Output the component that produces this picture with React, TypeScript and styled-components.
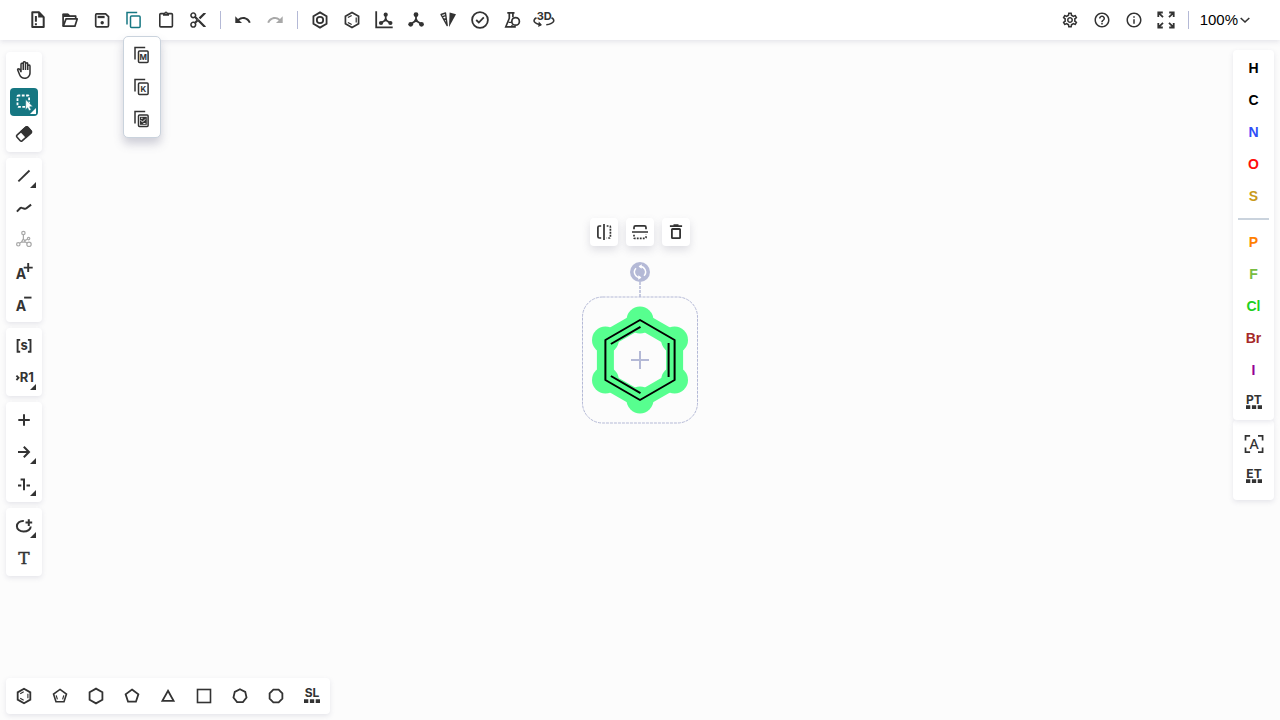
import React from 'react';
import styled, { createGlobalStyle, css } from 'styled-components';
import { MdOutlineSettings, MdHelpOutline, MdInfoOutline, MdOutlineBackHand } from 'react-icons/md';

const GlobalStyle = createGlobalStyle`
  *, *::before, *::after { box-sizing: border-box; }
  body {
    margin: 0;
    background: #fcfcfc;
    color: #333333;
    font-family: "Liberation Sans", Arial, sans-serif;
    font-size: 14px;
  }
`;

const Editor = styled.div`
  display: grid;
  grid-template-columns: auto 1fr auto;
  grid-template-rows: 40px 1fr auto;
  min-height: 100vh;
`;

const TopBar = styled.header`
  grid-area: 1 / 1 / 2 / -1;
  display: flex;
  align-items: center;
  justify-content: space-between;
  padding: 0 24px;
  background: #ffffff;
  box-shadow: 0 2px 5px rgba(103, 104, 132, 0.15);
  z-index: 2;
`;

const BarGroup = styled.div`
  display: flex;
  align-items: center;
  gap: 4px;
`;

const BarDivider = styled.span`
  width: 1px;
  height: 18px;
  margin: 0 4px;
  background: #b4b9d6;
`;

const ToolButton = styled.button<{ $active?: boolean; $accent?: boolean; $more?: boolean }>`
  position: relative;
  display: flex;
  flex: none;
  align-items: center;
  justify-content: center;
  width: 28px;
  height: 28px;
  padding: 0;
  border: 0;
  border-radius: 4px;
  background: ${(p) => (p.$active ? '#167782' : 'transparent')};
  color: ${(p) => (p.$active ? '#ffffff' : p.$accent ? '#167782' : '#333333')};
  cursor: pointer;

  &:disabled { color: #a8a8a8; }

  ${(p) =>
    p.$more &&
    css`
      &::after {
        content: '';
        position: absolute;
        right: 2px;
        bottom: 2px;
        width: 6px;
        height: 6px;
        background: currentColor;
        clip-path: polygon(100% 0, 100% 100%, 0 100%);
      }
    `}
`;

const CopyControl = styled.div`
  position: relative;
`;

const CopyMenu = styled.div`
  position: absolute;
  top: 30px;
  left: 3px;
  display: flex;
  flex-direction: column;
  gap: 4px;
  padding: 4px;
  border: 1px solid #cad3dd;
  border-radius: 5px;
  background: #ffffff;
  box-shadow: 0 6px 10px rgba(103, 104, 132, 0.3);
`;

const ZoomButton = styled.button`
  display: flex;
  align-items: center;
  gap: 2px;
  padding: 0 6px 0 3px;
  border: 0;
  background: transparent;
  color: #000000;
  font-family: inherit;
  font-size: 15px;
  line-height: 20px;
`;

const Panel = styled.div`
  display: flex;
  flex-direction: column;
  align-items: center;
  gap: 4px;
  padding: 4px;
  border-radius: 4px;
  background: #ffffff;
  box-shadow: 0 2px 5px rgba(103, 104, 132, 0.15);
`;

const LeftBar = styled.nav`
  grid-area: 2 / 1;
  display: flex;
  flex-direction: column;
  gap: 6px;
  padding: 12px 0 0 6px;
  z-index: 1;
`;

const RightBar = styled.nav`
  grid-area: 2 / 3;
  display: flex;
  flex-direction: column;
  width: 47px;
  padding: 10px 6px 0 0;
  z-index: 1;

  ${Panel}:first-child {
    position: relative;
    z-index: 1;
  }

  ${Panel}:last-child { padding: 10px 4px; }
`;

const BottomBar = styled.nav`
  grid-area: 3 / 1 / 4 / -1;
  justify-self: start;
  padding: 0 0 6px 6px;
  z-index: 1;

  ${Panel} {
    flex-direction: row;
    gap: 8px;
  }
`;

const ElementButton = styled(ToolButton)<{ $tint: string }>`
  color: ${(p) => p.$tint};
  font-family: inherit;
  font-size: 14px;
  font-weight: 700;
`;

const ElementDivider = styled.span`
  align-self: stretch;
  height: 2px;
  margin: 4px 1px;
  background: #cad3dd;
`;

const Canvas = styled.main`
  grid-area: 1 / 1 / -1 / -1;
  display: flex;
  flex-direction: column;
  align-items: center;
  justify-content: center;
  gap: 16px;
  padding-bottom: 78px;
`;

const FloatingTools = styled.div`
  display: flex;
  gap: 8px;

  ${ToolButton} {
    background: #ffffff;
    box-shadow: 0 4px 8px rgba(103, 104, 132, 0.2);
  }
`;

const Glyph = styled.text<{ $font?: string; $weight?: number }>`
  fill: currentColor;
  stroke: none;
  font-family: ${(p) => p.$font ?? 'Inter'}, sans-serif;
  font-weight: ${(p) => p.$weight ?? 700};
`;

const SlabGlyph = styled(Glyph)`
  font-family: "DejaVu Serif", serif;
  font-weight: 400;
  stroke: currentColor;
  stroke-width: 0.4px;
`;

type IconProps = { children: React.ReactNode; w?: number };
const Icon = ({ children, w = 2 }: IconProps) => (
  <svg width="24" height="24" viewBox="0 0 24 24" fill="none" stroke="currentColor" strokeWidth={w} aria-hidden="true">
    {children}
  </svg>
);

const ring = (n: number, r: number, cy = 12, turn = 0) =>
  Array.from({ length: n }, (_, i) => {
    const a = ((i * 360) / n - 90 + turn) * (Math.PI / 180);
    return `${(12 + r * Math.cos(a)).toFixed(2)},${(cy + r * Math.sin(a)).toFixed(2)}`;
  }).join(' ');

const CopyShape = () => (
  <>
    <path d="M5 16.6V4.6h10.2" />
    <rect x="8.5" y="7.9" width="9.6" height="11.5" rx="1" />
  </>
);

const ThreeDots = () => (
  <path d="M4 17.1h4.3M9.9 17.1h4.3M15.7 17.1H20" strokeWidth="3.6" />
);

const icons = {
  clear: (
    <Icon>
      <path d="M6.3 4.3h6.6l4.8 4.8v10H6.3z" strokeLinejoin="round" />
      <path d="M12.2 3.6v6h6z" fill="currentColor" stroke="none" />
      <path d="M9.9 8v5.8M9.9 15.2v2" />
    </Icon>
  ),
  open: (
    <Icon w={1.7}>
      <path d="M5.1 18.2V6.4h4.8l1.7 1.7h6.1v2.8" strokeLinejoin="round" />
      <path d="M5.3 18.2 8 10.9h11.2l-2.3 7.3z" strokeLinejoin="round" />
      <path d="M4.6 5.7h5.5l2 2h5.6v1.4H5z" fill="currentColor" stroke="none" />
    </Icon>
  ),
  save: (
    <Icon w={1.7}>
      <path d="M6.6 5.8h9l2.9 2.9v8.7a1.5 1.5 0 0 1-1.5 1.5H6.8a1.3 1.3 0 0 1-1.1-1.4V7.1a1.2 1.2 0 0 1 .9-1.3z" />
      <path d="M7.6 9h7" strokeWidth="2.3" />
      <circle cx="12.2" cy="14.7" r="1.7" fill="currentColor" stroke="none" />
    </Icon>
  ),
  copy: <Icon w={1.5}><CopyShape /></Icon>,
  paste: (
    <Icon w={1.6}>
      <rect x="5.8" y="5.6" width="12.6" height="13.3" rx="1" />
      <path d="M9 7.8V5h1.6a1.5 1.5 0 0 1 2.8 0H15v2.8z" fill="currentColor" stroke="none" />
      <circle cx="12" cy="5.2" r="1.6" fill="currentColor" stroke="none" />
      <circle cx="12" cy="5.3" r=".5" fill="#fff" stroke="none" />
    </Icon>
  ),
  cut: (
    <Icon>
      <path
        transform="translate(2.6 2.6) scale(.78)"
        fill="currentColor"
        stroke="none"
        d="M9.64 7.64c.23-.5.36-1.05.36-1.64 0-2.21-1.79-4-4-4S2 3.79 2 6s1.79 4 4 4c.59 0 1.14-.13 1.64-.36L10 12l-2.36 2.36C7.14 14.13 6.59 14 6 14c-2.21 0-4 1.79-4 4s1.79 4 4 4 4-1.79 4-4c0-.59-.13-1.14-.36-1.64L12 14l7 7h3v-1L9.64 7.64zM6 8c-1.1 0-2-.89-2-2s.9-2 2-2 2 .89 2 2-.9 2-2 2zm0 12c-1.1 0-2-.89-2-2s.9-2 2-2 2 .89 2 2-.9 2-2 2zm6-7.5c-.28 0-.5-.22-.5-.5s.22-.5.5-.5.5.22.5.5-.22.5-.5.5zM19 3l-6 6 2 2 7-7V3z"
      />
    </Icon>
  ),
  undo: (
    <Icon>
      <path
        transform="translate(2.8 3.1) scale(.75)"
        fill="currentColor"
        stroke="none"
        d="M12.5 8c-2.65 0-5.05.99-6.9 2.6L2 7v9h9l-3.62-3.62c1.39-1.16 3.16-1.88 5.12-1.88 3.54 0 6.55 2.31 7.6 5.5l2.37-.78C21.08 11.03 17.15 8 12.5 8z"
      />
    </Icon>
  ),
  redo: (
    <Icon>
      <path
        transform="translate(3.2 3.1) scale(.75)"
        fill="currentColor"
        stroke="none"
        d="M18.4 10.6C16.55 8.99 14.15 8 11.5 8c-4.65 0-8.58 3.03-9.96 7.22L3.9 16c1.05-3.19 4.05-5.5 7.6-5.5 1.95 0 3.73.72 5.12 1.88L13 16h9V7l-3.6 3.6z"
      />
    </Icon>
  ),
  aromatize: (
    <Icon w={1.8}>
      <polygon points={ring(6, 7.6)} />
      <circle cx="12" cy="12" r="3.2" />
    </Icon>
  ),
  dearomatize: (
    <Icon w={1.7}>
      <polygon points={ring(6, 7.6)} />
      <path d="m7.9 9.6 3.8-2.2M7.9 14.4l3.8 2.2M16.2 9.6v4.8" strokeWidth="1.2" />
    </Icon>
  ),
  layout: (
    <Icon w={1.7}>
      <path d="M4.2 3.3v16.1h16.5" strokeWidth="1.8" />
      <path d="M13.7 7v5L9 15M13.7 12l4.6 3" />
      <g fill="currentColor" stroke="none">
        <circle cx="13.7" cy="6.7" r="2.1" />
        <circle cx="13.7" cy="11.8" r="1.4" />
        <circle cx="9" cy="15" r="2.1" />
        <circle cx="18.4" cy="15" r="2.1" />
      </g>
    </Icon>
  ),
  clean: (
    <Icon w={1.8}>
      <path d="M12 7v5.5L7 16M12 12.5l5.2 3.5" />
      <g fill="currentColor" stroke="none">
        <circle cx="12" cy="6.7" r="2.4" />
        <circle cx="12" cy="12.5" r="1.7" />
        <circle cx="6.7" cy="16.3" r="2.4" />
        <circle cx="17.5" cy="16.3" r="2.4" />
      </g>
    </Icon>
  ),
  cip: (
    <Icon w={1.4}>
      <path d="M5 6.5 9.500 5 11.200 17.600zM6.200 8.800l3.800-1.400M7.700 11.400l2.700-.9" strokeLinejoin="round" />
      <path d="M13.600 4.500 20 6.200l-7 12.900z" fill="currentColor" stroke="none" />
    </Icon>
  ),
  check: (
    <Icon w={1.8}>
      <circle cx="12" cy="12" r="7.9" />
      <path d="m8.2 12 2.6 2.5 5-5.2" />
    </Icon>
  ),
  analyse: (
    <Icon w={1.7}>
      <path d="M7.3 4.8h7.2M9.3 4.8v5.4L5.8 18.8h10M12.9 4.8v4.5" />
      <circle cx="15.6" cy="13.4" r="3.8" />
      <path d="M8.5 14.3h3.3M12.5 16.8l-1.5 2" strokeWidth="1.2" />
    </Icon>
  ),
  threeD: (
    <Icon w={1.6}>
      <Glyph x="12.3" y="12.2" fontSize="11" textAnchor="middle">3D</Glyph>
      <path d="M4.5 9.8c-4.8 2.5-2.2 6 4.4 6.9M19.5 9.8c4.5 2.5 2.1 6-5.2 6.9" />
      <path d="M6.8 13.6 10 16.9l-3.8 2.2z" fill="currentColor" stroke="none" />
    </Icon>
  ),
  fullscreen: (
    <Icon w={1.8}>
      <path d="M4.3 9V4.5h4.5M15.2 4.5h4.5V9M19.7 15v4.5h-4.5M8.8 19.5H4.3V15M4.6 4.8l4.4 4.4M19.4 4.8 15 9.2M19.4 19.2 15 14.8M4.6 19.2 9 14.8" />
    </Icon>
  ),
  select: (
    <Icon w={1.8}>
      <rect x="5.5" y="5.5" width="11.6" height="11.4" rx="1" strokeDasharray="2.8 1.5" strokeDashoffset="1" />
      <path d="m13.8 9.6 7 7-3.2.2 1.5 3-2 .9-1.4-3-2.2 2z" fill="currentColor" stroke="#167782" strokeWidth=".5" />
    </Icon>
  ),
  eraser: (
    <Icon w={1.6}>
      <g transform="rotate(-42 12 12)">
        <rect x="4.7" y="8.2" width="14.6" height="7.6" rx="1.3" />
        <path d="M11.5 8.2H18a1.3 1.3 0 0 1 1.3 1.3v5a1.3 1.3 0 0 1-1.3 1.3h-6.5z" fill="currentColor" />
      </g>
    </Icon>
  ),
  bond: <Icon w={1.8}><path d="M6.4 17.4 17.5 6.5" /></Icon>,
  chain: <Icon><path d="m4.9 15.6 3.2-3.4q.7-.7 1.7-.3l2.7.8q1 .3 1.9-.4l4.7-3.7" /></Icon>,
  stereo: (
    <Icon w={1.2}>
      <circle cx="11.4" cy="5" r="1.7" />
      <circle cx="16.6" cy="10.6" r="1.2" />
      <circle cx="6.3" cy="16.3" r="1.7" />
      <circle cx="17" cy="16.3" r="2.2" />
      <path d="m11.4 10.7 2 3.4h-4zM11.4 6.8v4M13 12.4l2.5-1.2M9.6 13.9 7.8 15M13.3 13.9l1.8 1.1" />
    </Icon>
  ),
  chargePlus: (
    <Icon w={1.9}>
      <Glyph x="3.8" y="19" fontSize="14">A</Glyph>
      <path d="M11.7 7.6h9M16.2 3.1v9" />
    </Icon>
  ),
  chargeMinus: (
    <Icon w={1.9}>
      <Glyph x="3.8" y="19" fontSize="14">A</Glyph>
      <path d="M12.1 5.6h7.4" />
    </Icon>
  ),
  sgroup: (
    <Icon w={1.9}>
      <path d="M8.2 5.9H5.6v11.9h2.6M15.9 5.9h2.6v11.9h-2.6" />
      <Glyph x="12.1" y="16" fontSize="13" textAnchor="middle">s</Glyph>
    </Icon>
  ),
  rgroup: (
    <Icon w={1.8}>
      <path d="m4.4 9.6 2.2 2.2L4.4 14" />
      <Glyph x="7.7" y="16.4" fontSize="13">R1</Glyph>
    </Icon>
  ),
  plus: <Icon><path d="M6.3 12h11.5M12 6.3v11.5" /></Icon>,
  arrow: <Icon><path d="M6 12h10.6M11.8 6.7 17 12l-5.2 5.3" /></Icon>,
  mapping: <Icon><path d="M8.6 7.6H12v10.6M6 13.6h3.3M14.5 13.6H18" /></Icon>,
  shape: (
    <Icon>
      <path d="M11.8 7C7.9 6.6 4.9 9.2 4.9 12.2c0 3.1 2.9 5.4 6.7 5.4 4 0 7.1-2.2 7.1-5M13.5 8.5h6.7M16.8 5.2v6.7" />
    </Icon>
  ),
  text: (
    <Icon>
      <SlabGlyph x="12" y="18.2" fontSize="17" textAnchor="middle">T</SlabGlyph>
    </Icon>
  ),
  flipH: (
    <Icon w={1.7}>
      <path d="M9.2 6H7.4a1.5 1.5 0 0 0-1.5 1.500v9A1.500 1.500 0 0 0 7.400 18h1.800M12 4v16" />
      <path d="M14.700 6h2.800q.9 0 .9.900v10.200q0 .9-.9.900h-2.800" strokeDasharray="1.8 1.2" />
    </Icon>
  ),
  flipV: (
    <Icon w={1.7}>
      <path d="M6 9.200V7.400A1.500 1.500 0 0 1 7.500 5.900h9A1.500 1.500 0 0 1 18 7.400v1.800M4 12h16" />
      <path d="M6 14.700v2.800q0 .9.900.9h10.200q.9 0 .9-.9v-2.800" strokeDasharray="1.8 1.2" />
    </Icon>
  ),
  trash: (
    <Icon w={1.8}>
      <path d="M5.900 6.200h12.200M9.500 5.200h5" />
      <rect x="7.900" y="9" width="8.200" height="9.200" rx=".6" />
    </Icon>
  ),
  benzene: (
    <Icon w={1.8}>
      <polygon points={ring(6, 7.3)} />
      <path d="m8.2 9.7 3.5-2M8.2 14.3l3.5 2M15.9 9.7v4.6" strokeWidth="1.1" />
    </Icon>
  ),
  cyclopentadiene: (
    <Icon w={1.6}>
      <polygon points={ring(5, 6.8, 12.2)} />
      <path d="m8.2 11.4 1.2 4M15.8 11.4l-1.2 4" strokeWidth="1.2" />
    </Icon>
  ),
  cyclohexane: <Icon w={1.8}><polygon points={ring(6, 7.4)} /></Icon>,
  cyclopentane: <Icon w={1.8}><polygon points={ring(5, 6.7, 12.3)} /></Icon>,
  cyclopropane: <Icon w={1.8}><path d="m12 6.8 5.6 10.1H6.4z" /></Icon>,
  cyclobutane: <Icon w={1.6}><rect x="5.5" y="5.5" width="13" height="13" /></Icon>,
  cycloheptane: <Icon w={1.8}><polygon points={ring(7, 6.7)} /></Icon>,
  cyclooctane: <Icon w={1.8}><polygon points={ring(8, 6.9, 12, 22.5)} /></Icon>,
  library: (
    <Icon>
      <Glyph x="12" y="13" fontSize="12" textAnchor="middle">SL</Glyph>
      <ThreeDots />
    </Icon>
  ),
  periodic: (
    <Icon>
      <Glyph x="12" y="13.5" fontSize="12" textAnchor="middle">PT</Glyph>
      <ThreeDots />
    </Icon>
  ),
  extended: (
    <Icon>
      <Glyph x="12" y="13.5" fontSize="12" textAnchor="middle">ET</Glyph>
      <ThreeDots />
    </Icon>
  ),
  anyAtom: (
    <Icon w={1.7}>
      <path d="M3.5 8.5V3.8h4.6M16 3.8h4.6v4.7M20.6 15.6v4.6H16M8.1 20.2H3.5v-4.6" />
      <Glyph x="12.1" y="17" fontSize="14" textAnchor="middle" $font="Noto Sans" $weight={500}>A</Glyph>
    </Icon>
  ),
};

const CopyAs = ({ letter }: { letter?: string }) => (
  <Icon w={1.5}>
    <CopyShape />
    {letter ? (
      <Glyph x="13.3" y="16.5" fontSize="8" textAnchor="middle">{letter}</Glyph>
    ) : (
      <g>
        <rect x="10" y="9.8" width="6.8" height="8" fill="currentColor" stroke="none" />
        <path d="m10.5 13.5 2.2 1.2 2.8-2.4M13.3 16.5h2.2M11 11.3h1.7" stroke="#fff" strokeWidth=".9" />
      </g>
    )}
  </Icon>
);

type Tool = { id: keyof typeof icons; label: string; more?: boolean; active?: boolean; disabled?: boolean };

const Tools = ({ items }: { items: Tool[] }) => (
  <>
    {items.map((t) => (
      <ToolButton key={t.id} type="button" aria-label={t.label} $more={t.more} $active={t.active} disabled={t.disabled}>
        {icons[t.id]}
      </ToolButton>
    ))}
  </>
);

const leftGroups: Tool[][] = [
  [
    { id: 'bond', label: 'Single bond', more: true },
    { id: 'chain', label: 'Chain' },
    { id: 'stereo', label: 'Stereochemistry', disabled: true },
    { id: 'chargePlus', label: 'Charge plus' },
    { id: 'chargeMinus', label: 'Charge minus' },
  ],
  [
    { id: 'sgroup', label: 'S-Group' },
    { id: 'rgroup', label: 'R-Group', more: true },
  ],
  [
    { id: 'plus', label: 'Reaction plus' },
    { id: 'arrow', label: 'Arrow', more: true },
    { id: 'mapping', label: 'Reaction mapping', more: true },
  ],
  [
    { id: 'shape', label: 'Shape', more: true },
    { id: 'text', label: 'Add text' },
  ],
];

const templates: Tool[] = [
  { id: 'benzene', label: 'Benzene' },
  { id: 'cyclopentadiene', label: 'Cyclopentadiene' },
  { id: 'cyclohexane', label: 'Cyclohexane' },
  { id: 'cyclopentane', label: 'Cyclopentane' },
  { id: 'cyclopropane', label: 'Cyclopropane' },
  { id: 'cyclobutane', label: 'Cyclobutane' },
  { id: 'cycloheptane', label: 'Cycloheptane' },
  { id: 'cyclooctane', label: 'Cyclooctane' },
  { id: 'library', label: 'Structure library' },
];

const commonAtoms = [['H', '#000000'], ['C', '#000000'], ['N', '#304ff7'], ['O', '#ff0d0d'], ['S', '#c99a19']];
const otherAtoms = [['P', '#ff8000'], ['F', '#78bc42'], ['Cl', '#1fd01f'], ['Br', '#a62929'], ['I', '#940094']];

const Atoms = ({ items }: { items: string[][] }) => (
  <>
    {items.map(([symbol, tint]) => (
      <ElementButton key={symbol} type="button" $tint={tint}>{symbol}</ElementButton>
    ))}
  </>
);

const corners: [number, number][] = [[58, 58], [92.6, 78], [92.6, 118], [58, 138], [23.4, 118], [23.4, 78]];
const outline = corners.map((c) => c.join(',')).join(' ');

const Molecule = () => (
  <svg width="116" height="162" viewBox="0 0 116 162" fill="none" role="img" aria-label="Selected benzene ring">
    <rect x=".5" y="35" width="115" height="126" rx="20" stroke="#b4b9d6" strokeDasharray="3 1" />
    <path d="M58 20v15" stroke="#b4b9d6" strokeDasharray="3 1" strokeWidth="1.5" />
    <circle cx="58" cy="10" r="10" fill="#b4b9d6" />
    <g stroke="#fff" strokeWidth="1.5">
      <path d="M58.6 15.5A5.5 5.5 0 0 1 54 6.2M57.4 4.5A5.5 5.5 0 0 1 62 13.8" />
      <path d="m59.8 2.2-3.2 2.4 3 2.2zM56.2 17.8l3.2-2.4-3-2.2z" fill="#fff" stroke="none" />
    </g>
    <polygon points={outline} stroke="#57ff8f" strokeWidth="17" />
    {corners.map(([x, y]) => (
      <circle key={`${x}-${y}`} cx={x} cy={y} r="13.4" fill="#57ff8f" />
    ))}
    <g stroke="#000" strokeWidth="2">
      <polygon points={outline} strokeLinejoin="round" />
      <path d="M28.9 82 58.5 64.9M86.6 81v34M28.9 114 58.5 131.1" />
    </g>
    <path d="M49 98h18M58 89v18" stroke="#b4b9d6" strokeWidth="2" />
  </svg>
);

export default function App() {
  return (
    <>
      <GlobalStyle />
      <Editor>
        <Canvas>
          <FloatingTools>
            <Tools
              items={[
                { id: 'flipH', label: 'Horizontal flip' },
                { id: 'flipV', label: 'Vertical flip' },
                { id: 'trash', label: 'Erase' },
              ]}
            />
          </FloatingTools>
          <Molecule />
        </Canvas>

        <TopBar>
          <BarGroup>
            <Tools
              items={[
                { id: 'clear', label: 'Clear canvas' },
                { id: 'open', label: 'Open' },
                { id: 'save', label: 'Save as' },
              ]}
            />
            <CopyControl>
              <ToolButton type="button" aria-label="Copy" $accent>{icons.copy}</ToolButton>
              <CopyMenu>
                <ToolButton type="button" aria-label="Copy as MOL"><CopyAs letter="M" /></ToolButton>
                <ToolButton type="button" aria-label="Copy as KET"><CopyAs letter="K" /></ToolButton>
                <ToolButton type="button" aria-label="Copy image"><CopyAs /></ToolButton>
              </CopyMenu>
            </CopyControl>
            <Tools items={[{ id: 'paste', label: 'Paste' }, { id: 'cut', label: 'Cut' }]} />
            <BarDivider />
            <Tools items={[{ id: 'undo', label: 'Undo' }, { id: 'redo', label: 'Redo', disabled: true }]} />
            <BarDivider />
            <Tools
              items={[
                { id: 'aromatize', label: 'Aromatize' },
                { id: 'dearomatize', label: 'Dearomatize' },
                { id: 'layout', label: 'Layout' },
                { id: 'clean', label: 'Clean up' },
                { id: 'cip', label: 'Calculate CIP' },
                { id: 'check', label: 'Check structure' },
                { id: 'analyse', label: 'Calculated values' },
                { id: 'threeD', label: '3D viewer' },
              ]}
            />
          </BarGroup>
          <BarGroup>
            <ToolButton type="button" aria-label="Settings"><MdOutlineSettings size={18} /></ToolButton>
            <ToolButton type="button" aria-label="Help"><MdHelpOutline size={18} /></ToolButton>
            <ToolButton type="button" aria-label="About"><MdInfoOutline size={18} /></ToolButton>
            <Tools items={[{ id: 'fullscreen', label: 'Fullscreen mode' }]} />
            <BarDivider />
            <ZoomButton type="button">
              100%
              <svg width="10" height="8" viewBox="0 0 10 8" fill="none" stroke="#333" strokeWidth="1.6" aria-hidden="true">
                <path d="m.7 2 4.300 4L9.300 2" />
              </svg>
            </ZoomButton>
          </BarGroup>
        </TopBar>

        <LeftBar>
          <Panel>
            <ToolButton type="button" aria-label="Hand tool"><MdOutlineBackHand size={18} /></ToolButton>
            <Tools
              items={[
                { id: 'select', label: 'Rectangle selection', active: true, more: true },
                { id: 'eraser', label: 'Erase' },
              ]}
            />
          </Panel>
          {leftGroups.map((group) => (
            <Panel key={group[0].id}><Tools items={group} /></Panel>
          ))}
        </LeftBar>

        <RightBar>
          <Panel>
            <Atoms items={commonAtoms} />
            <ElementDivider />
            <Atoms items={otherAtoms} />
            <Tools items={[{ id: 'periodic', label: 'Periodic table' }]} />
          </Panel>
          <Panel>
            <Tools items={[{ id: 'anyAtom', label: 'Any atom' }, { id: 'extended', label: 'Extended table' }]} />
          </Panel>
        </RightBar>

        <BottomBar>
          <Panel><Tools items={templates} /></Panel>
        </BottomBar>
      </Editor>
    </>
  );
}
